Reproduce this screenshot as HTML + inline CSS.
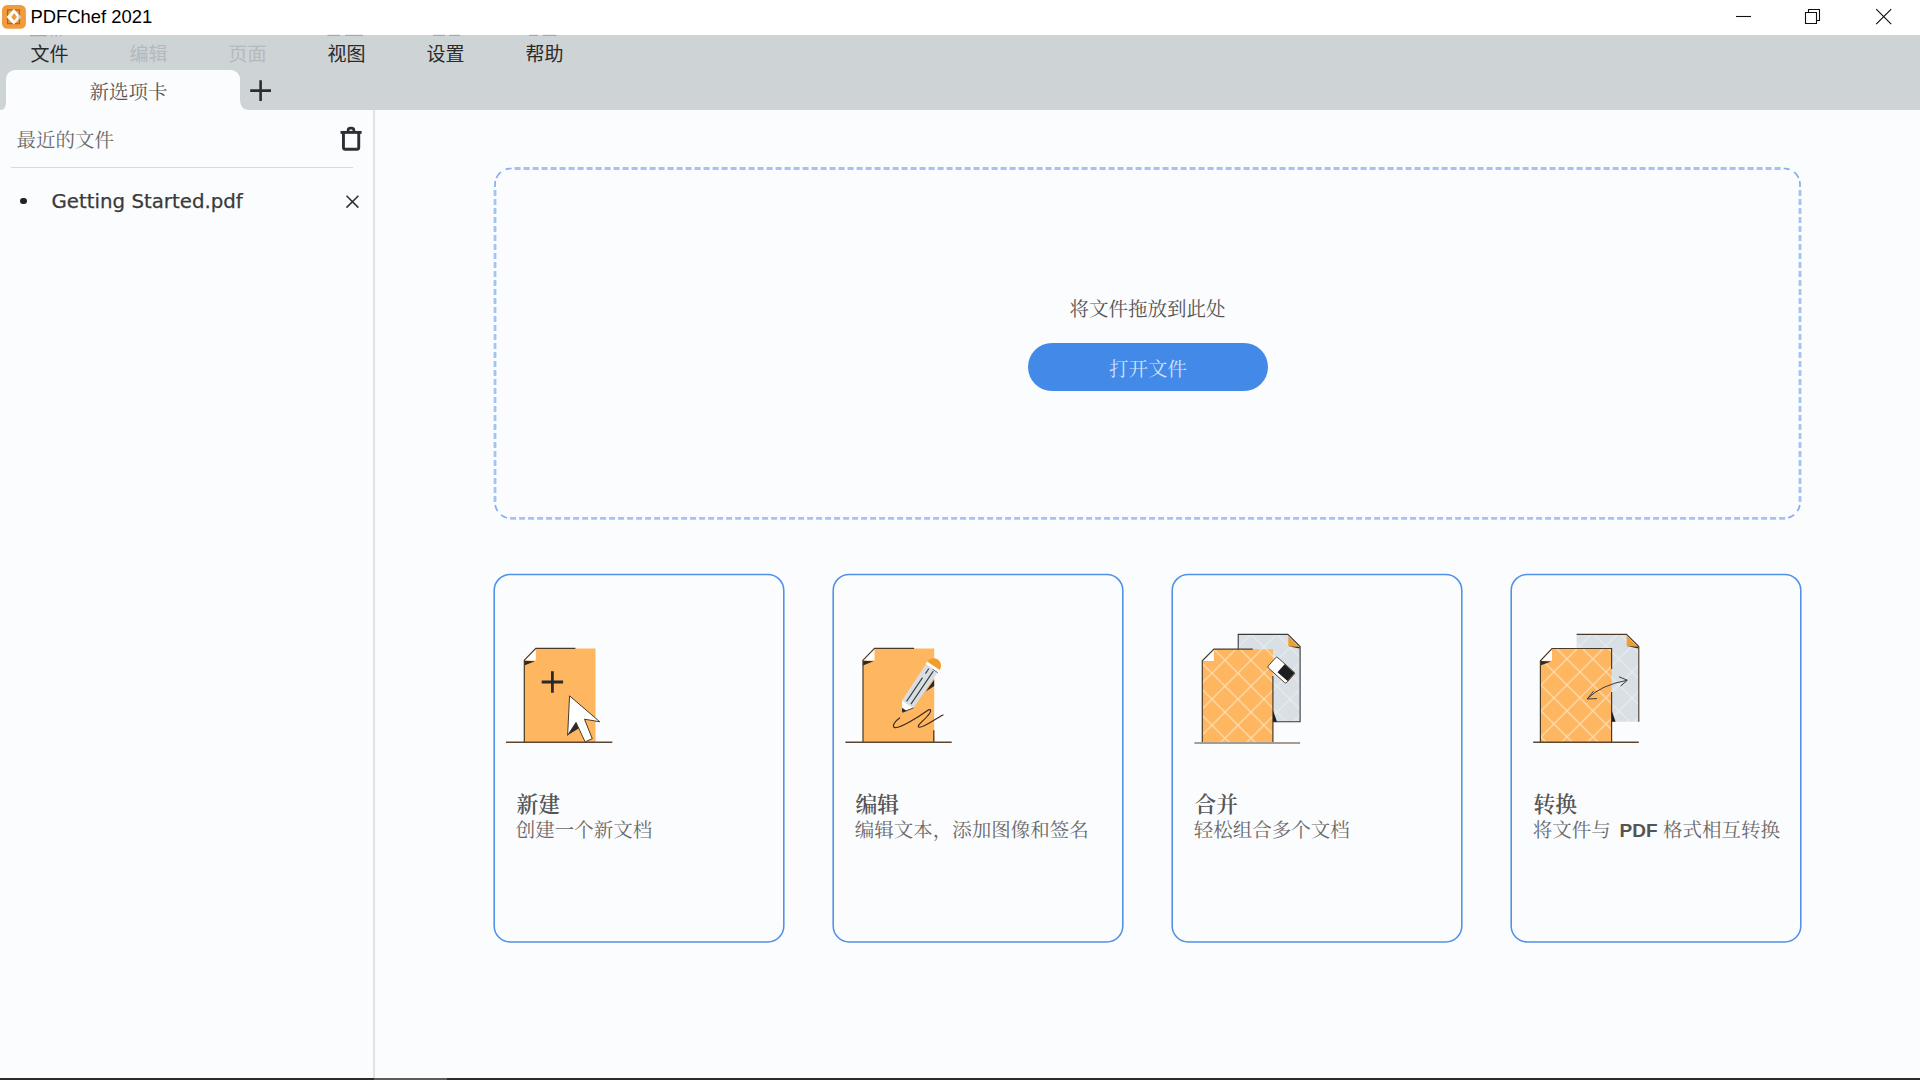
<!DOCTYPE html>
<html lang="zh-CN">
<head>
<meta charset="utf-8">
<title>PDFChef 2021</title>
<style>
html,body{margin:0;padding:0;}
body{width:1920px;height:1080px;overflow:hidden;position:relative;background:#fbfcfe;
  font-family:"Liberation Sans","Noto Sans CJK SC",sans-serif;}
.abs{position:absolute;}
.serif{font-family:"Liberation Serif","Noto Serif CJK SC",serif;}
.sans{font-family:"Liberation Sans","Noto Sans CJK SC",sans-serif;}
.t{position:absolute;white-space:nowrap;line-height:1;}

#titlebar{left:0;top:0;width:1920px;height:35px;background:#ffffff;}
#apptitle{left:30.5px;top:8px;font-size:18.4px;color:#000;letter-spacing:0px;}
#graybar{left:0;top:35px;width:1920px;height:75px;background:#ced3d6;}
.menu{top:44.8px;font-size:19px;color:#2a2a2a;}
.menu.dis{color:#b4b9bd;}
#tab{left:6.4px;top:70px;width:233.6px;height:40px;background:#fbfcfe;border-radius:9px 9px 0 0;}
#tabtext{left:89.5px;top:82.5px;font-size:19.5px;color:#555;}
#sidebar-line{left:373.4px;top:110px;width:1.8px;height:968px;background:#e2e2e4;}
#recent{left:16.5px;top:130.5px;font-size:19.5px;color:#6a6a6a;}
#sep{left:11px;top:167.2px;width:341.5px;height:1.2px;background:#d9dadd;}
#bullet{left:20px;top:197.6px;width:6.6px;height:6.6px;border-radius:50%;background:#222;}
#fname{left:51.5px;top:191.6px;font-size:19.8px;color:#3a3a3a;-webkit-text-stroke:0.25px #3a3a3a;font-family:"DejaVu Sans","Liberation Sans",sans-serif;}
#bottomline{left:0;top:1078px;width:1920px;height:2px;background:#2b2b2b;}
#bottomseg{left:374px;top:1078px;width:73px;height:2px;background:#5c5c5c;}

#droptext{left:1069.5px;top:299.8px;font-size:19.5px;color:#555;}
#openbtn{left:1027.6px;top:343.2px;width:240.2px;height:48.2px;border-radius:24.2px;background:#4289e8;}
#opentext{left:1109px;top:360px;font-size:19.5px;color:#cfe1fa;}

.ctitle{font-size:21.8px;font-weight:600;color:#555;top:794.9px;}
.csub{font-size:19.5px;color:#696969;top:821.3px;margin-left:-0.8px;}
</style>
</head>
<body>

<!-- title bar -->
<div id="titlebar" class="abs"></div>
<svg class="abs" style="left:0;top:0;filter:blur(0.3px)" width="40" height="35" viewBox="0 0 40 35">
  <rect x="2" y="4.9" width="23.9" height="23.9" rx="5.4" fill="#f29b3e"/>
  <rect x="7.6" y="10" width="11.8" height="13.6" fill="none" stroke="#8a5a24" stroke-opacity=".75" stroke-width="1.3"/>
  <path d="M13.8 9.1 L21 16.9 L13.8 24.6 L6.6 16.9 Z" fill="#fff"/>
  <path d="M18.4 14.1 L21 16.9 L18.4 19.7 Z" fill="#c9c9c9"/>
  <path d="M14.2 13 L17 16.9 L14.2 20.8 L11.2 16.9 Z" fill="#f29b3e"/>
  <path d="M12.2 12.4 L13.9 10.3 L15.4 12.2 L14 15 Z" fill="#f7b871" opacity=".0"/>
</svg>
<div id="apptitle" class="t sans">PDFChef 2021</div>
<svg class="abs" style="left:1720px;top:0" width="200" height="35" viewBox="0 0 200 35">
  <g fill="none" stroke="#111" stroke-width="1.1">
    <path d="M16 16.5 H31"/>
    <path d="M85.5 12.5 H96.5 V23.5 H85.5 Z"/>
    <path d="M88.5 12.5 V9.5 H99.5 V20.5 H96.5"/>
    <path d="M156.2 9.1 L171.2 24.1 M171.2 9.1 L156.2 24.1" stroke-width="1.15"/>
  </g>
</svg>

<!-- menu + tab bar -->
<div id="graybar" class="abs"></div>
<div class="t sans menu" style="left:30.5px">文件</div>
<div class="t sans menu dis" style="left:129.5px">编辑</div>
<div class="t sans menu dis" style="left:228.5px">页面</div>
<div class="t sans menu" style="left:327.5px">视图</div>
<div class="t sans menu" style="left:426.5px">设置</div>
<div class="t sans menu" style="left:525.5px">帮助</div>

<svg class="abs" style="left:0;top:34px" width="600" height="3" viewBox="0 34 600 3">
  <g stroke="#3a3a3a" stroke-opacity=".28" stroke-width="1.1" fill="none">
    <path d="M30 35.6 H46.5 M51 35.6 h1.4 M55.5 35.6 h1.4 M60 35.6 h1.4"/>
    <path d="M327.5 35.4 H340 M345 35.4 H363"/>
    <path d="M433 35.4 H445 M449 35.4 H460"/>
    <path d="M529 35.4 H538 M543 35.4 H556.5"/>
  </g>
</svg>
<div id="tab" class="abs"></div>
<svg class="abs" style="left:0;top:100px" width="250" height="10" viewBox="0 0 250 10">
  <path d="M0 10 H6.4 V0 Q6.4 10 0 10 Z" fill="#fbfcfe"/>
  <path d="M240 0 V10 H250 Q240 10 240 0 Z" fill="#fbfcfe"/>
</svg>
<div id="tabtext" class="t serif">新选项卡</div>
<svg class="abs" style="left:245.4px;top:75px" width="32" height="32" viewBox="0 0 32 32">
  <path d="M5.2 15.6 H26 M15.6 5.2 V26" stroke="#2a2d33" stroke-width="2.6" fill="none"/>
</svg>

<!-- sidebar -->
<div id="sidebar-line" class="abs"></div>
<div id="recent" class="t serif">最近的文件</div>
<svg class="abs" style="left:336px;top:122px" width="30" height="32" viewBox="336 122 30 32">
  <g fill="none" stroke="#2b2f36" stroke-width="2.9">
    <path d="M340.5 132.4 H361.6"/>
    <path d="M343.45 132.4 V147.2 Q343.45 149.25 345.5 149.25 H356.7 Q358.75 149.25 358.75 147.2 V132.4"/>
    <path d="M348.1 132 V130.4 Q348.1 128.1 350.4 128.1 H351.6 Q353.9 128.1 353.9 130.4 V132" stroke-width="2.7"/>
  </g>
</svg>
<div id="sep" class="abs"></div>
<div id="bullet" class="abs"></div>
<div id="fname" class="t">Getting Started.pdf</div>
<svg class="abs" style="left:340px;top:190px" width="24" height="24" viewBox="340 190 24 24">
  <path d="M346.5 195.8 L358.4 207.6 M358.4 195.8 L346.5 207.6" stroke="#333" stroke-width="1.6" fill="none"/>
</svg>

<!-- drop zone -->
<svg class="abs" style="left:480px;top:150px" width="1340" height="390" viewBox="480 150 1340 390">
  <g fill="none" stroke="#a3c3f3" stroke-width="2.8">
    <path d="M514.6 168.5 H1780.6 M510.1 518.3 H1785.1 M495 190 V502 M1800 190 V502" stroke-dasharray="6 3"/>
    <path d="M505.6 169.4 L506.8 169.1 L508.0 168.8 L509.2 168.6 L510.4 168.5 L511.6 168.5 M1783.6 168.5 L1784.8 168.5 L1786.0 168.6 L1787.2 168.8 L1788.4 169.1 L1789.6 169.5 M501.1 514.9 L502.3 515.7 L503.5 516.4 L504.7 517.0 L505.9 517.5 L507.1 517.8 M1788.1 517.8 L1789.3 517.4 L1790.5 516.9 L1791.7 516.3 L1792.9 515.6 L1794.1 514.7 M501.0 172.0 L499.7 173.2 L498.6 174.4 L497.7 175.6 L497.0 176.8 L496.4 178.0 M495.4 181.0 L495.2 182.2 L495.0 183.4 L495.0 184.6 L495.0 185.8 L495.0 187.0 M495.2 505.0 L495.5 506.2 L495.8 507.4 L496.3 508.6 L496.9 509.8 L497.6 511.0 M1794.0 172.0 L1795.3 173.2 L1796.4 174.4 L1797.3 175.6 L1798.0 176.8 L1798.6 178.0 M1799.6 181.0 L1799.8 182.2 L1800.0 183.4 L1800.0 184.6 L1800.0 185.8 L1800.0 187.0 M1799.8 505.0 L1799.5 506.2 L1799.2 507.4 L1798.7 508.6 L1798.1 509.8 L1797.4 511.0" stroke="#84aeee" stroke-width="1.7"/>
  </g>
</svg>
<div id="droptext" class="t serif">将文件拖放到此处</div>
<div id="openbtn" class="abs"></div>
<div id="opentext" class="t serif">打开文件</div>

<!-- cards -->
<svg class="abs" style="left:480px;top:560px" width="1340" height="400" viewBox="480 560 1340 400">
  <g fill="none" stroke="#4f90e8" stroke-width="1.55">
    <rect x="494.2" y="574.4" width="289.6" height="367.5" rx="16"/>
    <rect x="833.2" y="574.4" width="289.6" height="367.5" rx="16"/>
    <rect x="1172.2" y="574.4" width="289.6" height="367.5" rx="16"/>
    <rect x="1511.2" y="574.4" width="289.6" height="367.5" rx="16"/>
  </g>
</svg>

<div class="t serif ctitle" style="left:516.5px">新建</div>
<div class="t serif csub" style="left:516.5px">创建一个新文档</div>
<div class="t serif ctitle" style="left:855.5px">编辑</div>
<div class="t serif csub" style="left:855.5px">编辑文本，添加图像和签名</div>
<div class="t serif ctitle" style="left:1194.5px">合并</div>
<div class="t serif csub" style="left:1194.5px">轻松组合多个文档</div>
<div class="t serif ctitle" style="left:1533.5px">转换</div>
<div class="t serif csub" style="left:1533.5px">将文件与<b class="sans" style="font-size:19px;color:#555;margin:0 5.6px 0 8.8px">PDF</b>格式相互转换</div>

<!-- ICONS-START -->
<svg class="abs" style="left:480px;top:600px;filter:blur(0.45px)" width="1340" height="170" viewBox="480 600 1340 170">
  <defs>
    <pattern id="dia3" patternUnits="userSpaceOnUse" width="26" height="26" x="1198.95" y="660.2">
      <path d="M0 0 L26 26 M26 0 L0 26" stroke="#fff" stroke-opacity=".5" stroke-width="1.35" fill="none"/>
    </pattern>
    <pattern id="dia4" patternUnits="userSpaceOnUse" width="26" height="26" x="1540.9" y="658.9">
      <path d="M0 0 L26 26 M26 0 L0 26" stroke="#fff" stroke-opacity=".5" stroke-width="1.35" fill="none"/>
    </pattern>
  </defs>

  <!-- icon 1 : new -->
  <g>
    <path d="M535.8 648.5 H595.5 V742 H524.2 V660.2 Z" fill="#feb660"/>
    <path d="M535.8 649 V660.6 H524.4 Z" fill="#fff"/>
    <path d="M524.2 660.8 L535 661.3 L524.2 665.6 Z" fill="#2a2a2a"/>
    <path d="M575.4 648.4 H535.8 L524.3 660.2 V742" fill="none" stroke="#4a3a28" stroke-width="1.2"/>
    <path d="M506 742.2 H612.3" stroke="#5a4632" stroke-width="1.4" fill="none"/>
    <path d="M541.7 682 H563.1 M552.4 671.3 V692.7" stroke="#2b2b2b" stroke-width="2.8" fill="none"/>
    <path d="M569.55 695.85 L599.77 721.78 L584.47 719.19 L592.25 738.64 L585.11 741.88 L576.04 722.43 L567.61 735.4 Z" fill="#fff" stroke="#4a3a28" stroke-width="1"/>
    <path d="M567.9 735 L576.04 722.6 L578.6 728.4 Z" fill="#2a2a2a"/>
  </g>

  <!-- icon 2 : edit -->
  <g>
    <path d="M874.5 648.5 H934.2 V742 H862.9 V660.2 Z" fill="#feb660"/>
    <path d="M874.5 649 V660.6 H863.1 Z" fill="#fff"/>
    <path d="M862.9 660.8 L873.7 661.3 L862.9 665.6 Z" fill="#2a2a2a"/>
    <path d="M914.1 648.4 H874.5 L863 660.2 V742" fill="none" stroke="#4a3a28" stroke-width="1.2"/>
    <path d="M933.8 730.2 V742" stroke="#3a2e22" stroke-width="1.2" fill="none"/>
    <path d="M845.4 742.2 H951.7" stroke="#5a4632" stroke-width="1.4" fill="none"/>
    <!-- shadow beside pencil -->
    <path d="M934.2 679.8 V686 L925.8 691.5 Z" fill="#2a2a2a"/>
    <!-- squiggle -->
    <path d="M899.6 717.9 C895 721 891.8 726 894.3 727.4 C899 729.5 920 716 927.5 710.6 C931 708 931.5 710.5 929.5 713.5 C925.5 719.5 915.5 726 919 727.2 C923 728.5 935 719 943 715" fill="none" stroke="#3a2c1e" stroke-width="1.2" stroke-linecap="round"/>
    <!-- pencil, local coords: tip at origin pointing -x ; rotate so +x goes up-right -->
    <g transform="translate(902.1 712.4) rotate(-55.98)">
      <path d="M0 0 L10 -6.8 V6.8 Z" fill="#fff"/>
      <path d="M0 0 L3.8 -2.6 V2.6 Z" fill="#2a2a2a"/>
      <path d="M10 -6.8 L53.3 -7.3 V7.3 L10 6.8 Z" fill="#d8dfe4"/>
      <path d="M11.7 -2.5 H40.2 M11.8 2.7 H51.7 M45.2 -2.4 H51.4" stroke="#3f3f3f" stroke-width="1.15" fill="none"/>
      <path d="M53 1 V7.3" stroke="#3f3f3f" stroke-width=".9" fill="none"/>
      <rect x="53.3" y="-7.6" width="3" height="15.2" fill="#fff"/>
      <path d="M56.3 -7.4 A7.4 7.4 0 0 1 56.3 7.4 Z" fill="#f39c28"/>
      <path d="M0.6 0.5 L10 6.9" stroke="#2a2a2a" stroke-width=".8" fill="none"/>
    </g>
  </g>

  <!-- icon 3 : merge -->
  <g>
    <path d="M1238.2 634.3 H1287.8 L1300.1 646.6 V721.8 H1238.2 Z" fill="#d9e0e5"/>
    <path d="M1238.2 634.3 H1287.8 L1300.1 646.6 V721.8 H1238.2 Z" fill="url(#dia3)" opacity=".62"/>
    <path d="M1288.3 636.5 V646.3 L1299.3 647.2 Z" fill="#f39c28"/>
    <path d="M1288.3 646.3 L1299.6 647 L1299.6 648.6 Z" fill="#2a2a2a"/>
    <path d="M1238.2 649 V634.4 H1287.8 L1300.1 646.6 V721.8 H1273" fill="none" stroke="#3a3a3a" stroke-width="1.1"/>
    <path d="M1213.9 649.2 H1272.9 V742 H1202.2 V660.8 Z" fill="#feb660"/>
    <path d="M1213.9 649.2 H1272.9 V742 H1202.2 V660.8 Z" fill="url(#dia3)"/>
    <path d="M1213.9 649.7 V661 H1202.6 Z" fill="#fff"/>
    <path d="M1252.8 649.2 H1213.9 L1202.3 660.8 V742" fill="none" stroke="#4a3a28" stroke-width="1.2"/>
    <path d="M1272.9 676 V742" fill="none" stroke="#4a3a28" stroke-width="1.2"/>
    <path d="M1273 710.5 L1277 721.8 H1273 Z" fill="#1e1e1e"/>
    <path d="M1194.4 742.9 H1300.1" stroke="#a59d93" stroke-width="2" fill="none"/>
    <!-- eraser -->
    <g transform="translate(1281.2 670.1) rotate(41.8)">
      <rect x="-12.4" y="-7" width="24.8" height="14" rx="1.6" fill="#fff" stroke="#4a3a28" stroke-width=".9"/>
      <path d="M-1.4 -6.7 H11.4 Q12 -6.7 12 -6 V4 H-1.4 Z" fill="#1e1e1e"/>
    </g>
  </g>

  <!-- icon 4 : convert -->
  <g>
    <path d="M1576.6 634.3 H1626.5 L1638.8 646.6 V721.8 H1576.6 Z" fill="#d9e0e5"/>
    <path d="M1576.6 634.3 H1626.5 L1638.8 646.6 V721.8 H1576.6 Z" fill="url(#dia4)" opacity=".62"/>
    <path d="M1626.7 636.3 V646 L1637.8 647 Z" fill="#f39c28"/>
    <path d="M1626.7 646 L1638.3 646.8 L1638.3 648.4 Z" fill="#2a2a2a"/>
    <path d="M1576.6 634.4 H1626.5 L1638.8 646.6 V721.8" fill="none" stroke="#4a3a28" stroke-width="1.1"/>
    <path d="M1552 648.5 H1611.6 V742 H1540.3 V660.8 Z" fill="#feb660"/>
    <path d="M1552 648.5 H1611.6 V742 H1540.3 V660.8 Z" fill="url(#dia4)"/>
    <path d="M1552 649 V660.8 H1540.6 Z" fill="#fff"/>
    <path d="M1540.3 661 L1551 661.5 L1540.3 665.4 Z" fill="#2a2a2a"/>
    <path d="M1611.6 669 V648.5 H1552 L1540.4 660.8 V742" fill="none" stroke="#4a3a28" stroke-width="1.2"/>
    <path d="M1611.6 692 V742" fill="none" stroke="#4a3a28" stroke-width="1.2"/>
    <path d="M1611.7 710.5 L1615.6 721.8 H1611.7 Z" fill="#1e1e1e"/>
    <path d="M1533.2 742.2 H1638.8" stroke="#5a4632" stroke-width="1.4" fill="none"/>
    <!-- arrow -->
    <path d="M1587.3 698.8 Q1601 685 1627 680.3" fill="none" stroke="#3a3a3a" stroke-width="1"/>
    <path d="M1593.5 691.2 L1587.2 699 L1597 698.6" fill="none" stroke="#3a3a3a" stroke-width="1"/>
    <path d="M1619 676.8 L1627.3 680.2 L1620.5 686.2" fill="none" stroke="#3a3a3a" stroke-width="1"/>
  </g>
</svg>
<!-- ICONS-END -->

<div id="bottomline" class="abs"></div>
<div id="bottomseg" class="abs"></div>
</body>
</html>
